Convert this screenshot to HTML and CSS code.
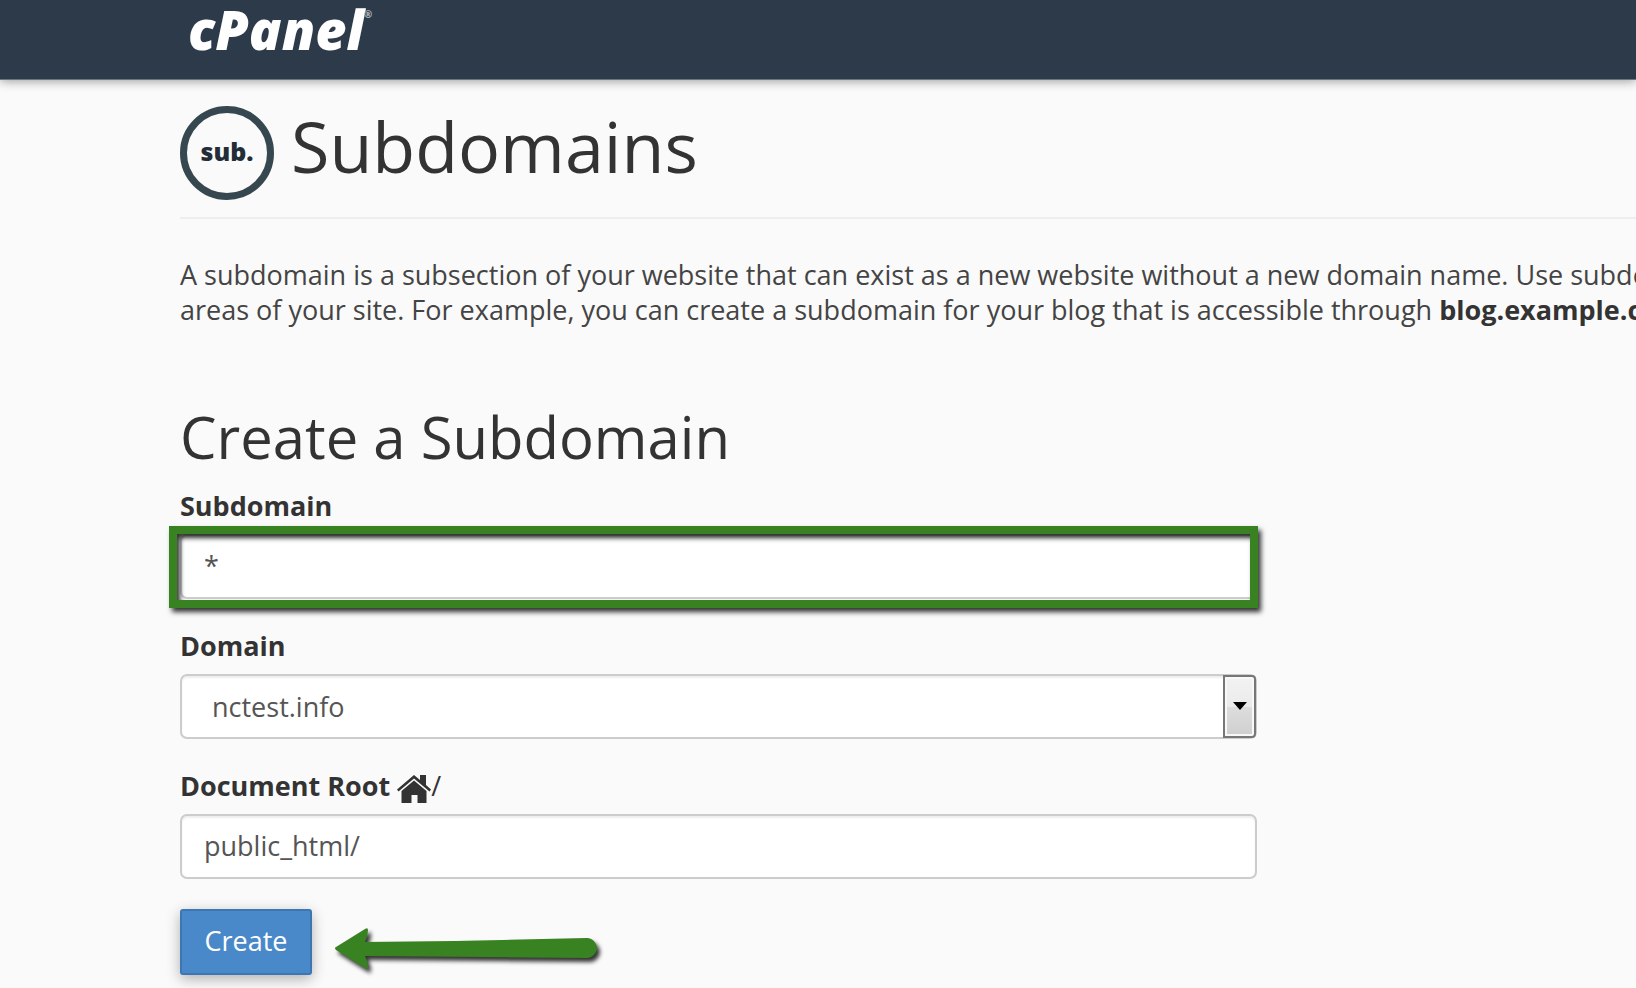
FILE: index.html
```html
<!DOCTYPE html>
<html lang="en">
<head>
    <meta charset="UTF-8">
    <meta name="viewport" content="width=device-width, initial-scale=1.0">
    <title>cPanel - Subdomains</title>
    <link rel="stylesheet" href="styles.css">
</head>
<body>
    <header class="navbar">
        <a href="#" class="logo">cPanel<sup>®</sup></a>
    </header>

    <main class="content">
        <div class="page-header">
            <span class="page-icon">sub.</span>
            <h1>Subdomains</h1>
        </div>

        <p class="description">
            A subdomain is a subsection of your website that can exist as a new website without a new domain name. Use subdomains<br>
            areas of your site. For example, you can create a subdomain for your blog that is accessible through <strong>blog.example.com</strong>
        </p>

        <h2>Create a Subdomain</h2>

        <form class="subdomain-form">
            <div class="form-group highlighted">
                <label for="subdomain">Subdomain</label>
                <input type="text" id="subdomain" name="subdomain" value="*">
            </div>

            <div class="form-group">
                <label for="domain">Domain</label>
                <div class="select-wrap">
                    <select id="domain" name="domain">
                        <option value="nctest.info">nctest.info</option>
                    </select>
                    <span class="select-arrow"></span>
                </div>
            </div>

            <div class="form-group">
                <label for="docroot">Document Root
                    <svg class="home-icon" viewBox="0 0 34 28" aria-hidden="true">
                        <path d="M17 0 L23 5 V0 H29 V10 L34 14.500 L32.500 16.500 L17 3.500 L1.500 16.500 L0 14.500 Z"/>
                        <path d="M17 5.500 L29.500 16 V28 H20.500 V20 H14.500 V28 H4.500 V16 Z"/>
                    </svg><span class="slash">/</span>
                </label>
                <input type="text" id="docroot" name="docroot" value="public_html/">
            </div>

            <div class="form-actions">
                <button type="submit" class="btn-create">Create</button>
                <svg class="arrow" viewBox="0 0 264 42" aria-hidden="true">
                    <path d="M1 19 L30 1 Q33 -1 33 2 Q33 8 30 14 L120 13 L252 10 C258 10 262 16 262 20 C262 24 258 30 252 30 L30 28 Q33 34 33 39 Q33 42 30 40 L1 22 Q-1 20 1 19 Z"/>
                </svg>
            </div>
        </form>
    </main>
</body>
</html>
```

FILE: styles.css
```css
* {
    margin: 0;
    padding: 0;
    box-sizing: border-box;
}

body {
    min-height: 100vh;
    font-family: 'Open Sans', 'Noto Sans', sans-serif;
    font-size: 27px;
    line-height: 35px;
    background-color: #fafafa;
    color: #333;
    overflow: hidden;
}

.navbar {
    height: 80px;
    padding-left: 188px;
    background-color: #2d3a4a;
    border-bottom: 1px solid #6c747e;
    box-shadow: 0 1px 10px rgba(0, 0, 0, 0.4);
}

.logo {
    display: flex;
    font-size: 54px;
    line-height: 58px;
    font-weight: 800;
    font-style: italic;
    color: #fff;
    text-decoration: none;
}

.logo sup {
    font-size: 10px;
    line-height: 28px;
    color: #a5abb2;
}

.content {
    padding: 26px 0 12px 180px;
}

.page-header {
    display: flex;
    gap: 17px;
    height: 113px;
    border-bottom: 2px solid #eee;
}

.page-icon {
    width: 94px;
    height: 94px;
    border: 7px solid #36474f;
    border-radius: 50%;
    font-size: 25px;
    line-height: 76px;
    font-weight: 800;
    text-align: center;
    color: #222d38;
}

h1 {
    font-size: 70px;
    line-height: 80px;
    font-weight: 400;
}

.description {
    margin-top: 38px;
    color: #444;
    white-space: nowrap;
}

.description strong {
    color: #333;
}

h2 {
    margin-top: 74px;
    font-size: 58px;
    line-height: 72px;
    font-weight: 400;
}

.subdomain-form {
    width: 74%;
    margin-top: 16px;
}

.form-group {
    position: relative;
    margin-bottom: 30px;
}

label {
    display: block;
    height: 45px;
    line-height: 33px;
    font-weight: 700;
}

input,
select {
    display: block;
    width: 100%;
    height: 65px;
    padding: 0 22px 3px;
    border: 2px solid #ccc;
    border-radius: 7px;
    background-color: #fff;
    box-shadow: inset 0 2px 2px rgba(0, 0, 0, 0.07);
    font-family: inherit;
    font-size: 27px;
    color: #555;
}

select {
    appearance: none;
    padding: 0 30px;
}

/* green frame around the field to fill in */
.highlighted::after {
    content: "";
    position: absolute;
    top: 37px;
    right: -1px;
    bottom: -9px;
    left: -11px;
    border: 8px solid #388222;
    box-shadow: 3px 4px 5px rgba(0, 0, 0, 0.8), inset 3px 4px 5px rgba(0, 0, 0, 0.8);
    pointer-events: none;
}

.select-wrap {
    position: relative;
}

.select-arrow {
    position: absolute;
    top: 1px;
    right: 1px;
    bottom: 1px;
    width: 33px;
    border: 2px solid #777;
    border-radius: 0 4px 4px 0;
    background: linear-gradient(#f2f2f2 0%, #ebebeb 50%, #dddddd 50%, #cfcfcf 100%);
    box-shadow: inset 0 0 0 2px #f8f8f8;
    pointer-events: none;
}

.select-arrow::after {
    content: "";
    position: absolute;
    top: 25px;
    left: 8px;
    border: 7px solid transparent;
    border-top: 8px solid #000;
    border-bottom: 0;
}

.home-icon {
    width: 34px;
    height: 28px;
    fill: #333;
    vertical-align: -7px;
}

.slash {
    font-weight: 400;
}

.form-actions {
    display: flex;
    gap: 23px;
}

.btn-create {
    width: 132px;
    height: 66px;
    padding-bottom: 3px;
    border: 2px solid #3c77b3;
    border-radius: 3px;
    background-color: #4989c9;
    box-shadow: 0 4px 14px rgba(0, 0, 0, 0.3);
    font-family: inherit;
    font-size: 27px;
    color: #fff;
    cursor: pointer;
}

.arrow {
    width: 264px;
    height: 42px;
    margin-top: 19px;
    overflow: visible;
    fill: #388222;
    filter: drop-shadow(3px 4px 2px rgba(0, 0, 0, 0.8));
}
```
